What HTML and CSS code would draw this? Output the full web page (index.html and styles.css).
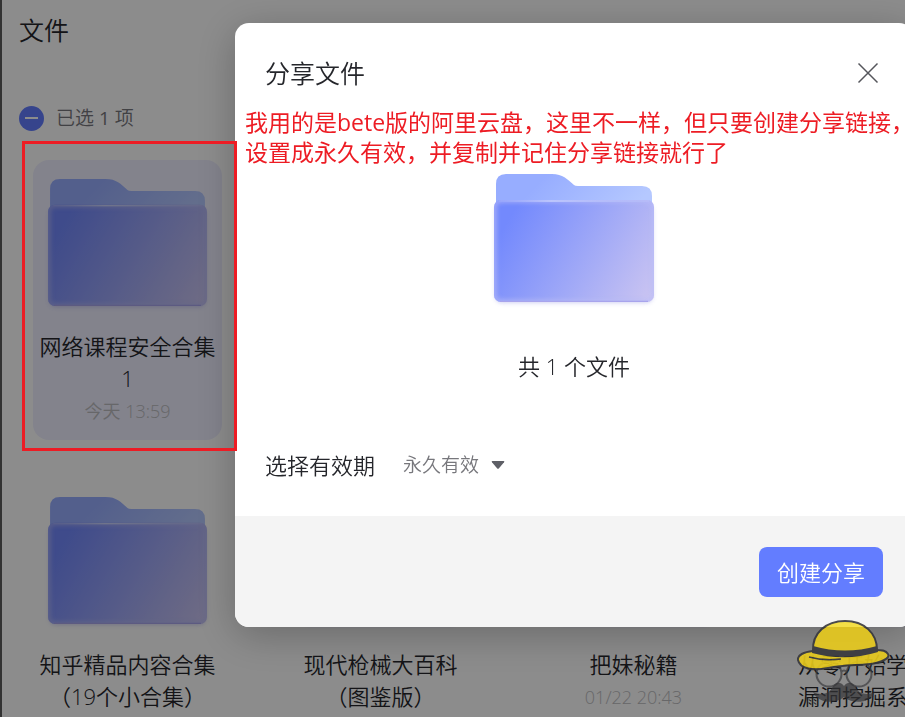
FILE: index.html
```html
<!DOCTYPE html>
<html lang="zh-CN">

<head>
    <meta charset="utf-8">
    <meta name="viewport" content="width=device-width, initial-scale=1.0">
    <title>文件</title>
    <link rel="stylesheet" href="styles.css">
</head>

<body>
    <!-- shared folder icon -->
    <svg class="symbols" aria-hidden="true">
        <defs>
            <linearGradient id="back" x1="0" y1="0" x2="1" y2="0.3">
                <stop offset="0.3" stop-color="#97adff" />
                <stop offset="1" stop-color="#b5c8ff" />
            </linearGradient>
            <linearGradient id="front" gradientUnits="userSpaceOnUse" x1="20" y1="45" x2="165" y2="130">
                <stop offset="0" stop-color="#7389fd" />
                <stop offset="0.5" stop-color="#9fa8f7" />
                <stop offset="1" stop-color="#cdc6f1" />
            </linearGradient>
            <linearGradient id="edge" x1="0" y1="0" x2="1" y2="0">
                <stop offset="0" stop-color="#c8d2ff" stop-opacity="0.2" />
                <stop offset="0.35" stop-color="#dde3ff" />
                <stop offset="1" stop-color="#c8d2ff" stop-opacity="0.3" />
            </linearGradient>
            <filter id="soft" x="-10%" y="-10%" width="120%" height="120%">
                <feGaussianBlur stdDeviation="2" />
            </filter>
            <clipPath id="frontClip">
                <rect x="4" y="28" width="160" height="102" rx="7" />
            </clipPath>
        </defs>
        <symbol id="folder" viewBox="0 0 168 136">
            <rect x="5" y="32" width="158" height="99" rx="7" fill="#8c8ce0" opacity="0.4" filter="url(#soft)" />
            <path d="M6 50V12Q6 2 16 2H62C73 2 77 7 84 13Q85 14 88 14H152Q162 14 162 24V50Z" fill="url(#back)" />
            <rect x="4" y="28" width="160" height="102" rx="7" fill="url(#front)" />
            <g clip-path="url(#frontClip)">
                <rect x="4" y="28" width="160" height="102" rx="7" fill="none" stroke="#b9bdf9" stroke-width="6" opacity="0.6" filter="url(#soft)" />
            </g>
            <path d="M9 28.5H159V29.5H9Z" fill="url(#edge)" />
            <path d="M10 129.3H158" stroke="#a8a4ec" stroke-width="1.2" />
        </symbol>
    </svg>

    <main class="page">
        <h1>文件</h1>
        <div class="selection">
            <button class="deselect" aria-label="取消选择"></button>
            <span>已选 <b>1</b> 项</span>
        </div>
        <section class="file-row">
            <article class="file selected">
                <svg class="folder"><use href="#folder" /></svg>
                <h2>网络课程安全合集<br>1</h2>
                <time>今天 13:59</time>
            </article>
        </section>
        <section class="file-row">
            <article class="file">
                <svg class="folder"><use href="#folder" /></svg>
                <h2>知乎精品内容合集<br>（19个小合集）</h2>
            </article>
            <article class="file">
                <svg class="folder"><use href="#folder" /></svg>
                <h2>现代枪械大百科<br>（图鉴版）</h2>
            </article>
            <article class="file">
                <svg class="folder"><use href="#folder" /></svg>
                <h2>把妹秘籍</h2>
                <time>01/22 20:43</time>
            </article>
            <article class="file">
                <svg class="folder"><use href="#folder" /></svg>
                <h2 class="long">从零开始学<br>漏洞挖掘系</h2>
            </article>
        </section>
    </main>

    <div class="backdrop"></div>

    <section class="dialog" role="dialog" aria-labelledby="dialog_title">
        <header>
            <h2 id="dialog_title">分享文件</h2>
            <button class="close" aria-label="关闭">
                <svg width="24" height="24" viewBox="0 0 24 24" fill="none" stroke="#55565c" stroke-width="1.5">
                    <path d="M2.5 2.5L21.5 21.5M21.5 2.5L2.5 21.5" />
                </svg>
            </button>
        </header>
        <div class="content">
            <svg class="folder"><use href="#folder" /></svg>
            <p>共 1 个文件</p>
        </div>
        <div class="expiry">
            <label for="expiry">选择有效期</label>
            <div class="select">
                <select id="expiry">
                    <option>永久有效</option>
                </select>
                <svg width="14" height="10" viewBox="0 0 14 10">
                    <path d="M1.5 1H12.5Q14 1 13 2.3L8 8.3Q7 9.4 6 8.3L1 2.3Q0 1 1.5 1Z" fill="#5e5f66" />
                </svg>
            </div>
        </div>
        <footer>
            <button class="create">创建分享</button>
        </footer>
    </section>

    <!-- annotations -->
    <div class="mark"></div>
    <p class="note">我用的是bete版的阿里云盘，这里不一样，但只要创建分享链接，<br>设置成永久有效，并复制并记住分享链接就行了</p>

    <!-- mascot -->
    <svg class="mascot" width="94" height="88" viewBox="0 0 94 88">
        <g fill="none" stroke="#3c3c3f" stroke-width="2" opacity="0.7">
            <circle cx="32" cy="55" r="12.5" />
            <circle cx="62" cy="55" r="12.5" />
            <path d="M44 53Q47 50 50 53" />
        </g>
        <path d="M47 67C51 62 56 63 59 69C63 76 71 76 78 73C73 84 57 86 47 78C37 86 21 84 16 73C23 76 31 76 35 69C38 63 43 62 47 67Z" fill="#333336" opacity="0.7" />
        <g opacity="0.9">
            <path d="M16 32C7 33 0 36 1 41C3 50 16 52 31 49C50 45 66 47 79 44C88 42 93 38 91 35C89 31 84 31 79 31Z" fill="#e8ca1c" stroke="#38383c" stroke-width="2" />
            <path d="M16 32C15 14 29 2 48 2C67 2 80 14 80 31Q48 41 16 32Z" fill="#e8ca1c" stroke="#38383c" stroke-width="2" />
            <path d="M29 8Q48 -2 67 8Z" fill="#fff04a" opacity="0.5" />
            <path d="M16 27Q48 36 80 27L81 33Q48 43 15 34Z" fill="#38383c" />
            <path d="M12 38Q26 42 44 40" fill="none" stroke="#38383c" stroke-width="1.5" />
        </g>
    </svg>
</body>

</html>
```
FILE: styles.css
```css
* {
    box-sizing: border-box;
}

body {
    margin: 0;
    height: 100vh;
    overflow: hidden;
    background-color: #fff;
    color: #25262b;
    font-family: "Open Sans", "Noto Sans CJK SC", sans-serif;
    font-size: 22px;
    font-weight: 350;
    line-height: 30px;
}

h1,
h2,
p {
    margin: 0;
    font-weight: 350;
}

button,
select {
    padding: 0;
    border: none;
    background: none;
    font: inherit;
    cursor: pointer;
}

.symbols {
    position: absolute;
    width: 0;
    height: 0;
}

.folder {
    display: block;
    width: 168px;
    height: 136px;
}

/* ------- file list -----------*/

.page {
    min-height: 100vh;
    padding-left: 17px;
    border-left: 2px solid #5c5c5c;
}

.page h1 {
    font-size: 25px;
    line-height: 60px;
}

.selection {
    display: flex;
    align-items: center;
    gap: 12px;
    margin-top: 43px;
    margin-bottom: 27px;
    color: #77777c;
    font-size: 19px;
}

.selection b {
    font-weight: 500;
}

.deselect {
    display: flex;
    align-items: center;
    justify-content: center;
    width: 25px;
    height: 25px;
    border-radius: 50%;
    background-color: #637dff;
}

.deselect::before {
    content: "";
    width: 13px;
    height: 2px;
    background-color: #fff;
}

.file-row {
    display: grid;
    grid-template-columns: repeat(4, 189px);
    gap: 64px;
    margin-left: 14px;
    margin-bottom: 38px;
}

.file {
    display: flex;
    flex-direction: column;
    align-items: center;
    padding: 17px 0 15px;
    border-radius: 16px;
    text-align: center;
    white-space: nowrap;
}

.file.selected {
    background-color: #eeeeff;
}

.file .folder {
    width: 167px;
    height: 135px;
}

.file h2 {
    margin-top: 18px;
    font-size: 22px;
    line-height: 32px;
}

.file h2.long {
    align-self: flex-start;
    padding-left: 6px;
}

.file time {
    margin-top: 3px;
    color: #bcbcc0;
    font-size: 18px;
    line-height: 28px;
}

.backdrop {
    position: fixed;
    inset: 0;
    background-color: rgba(0, 0, 0, 0.45);
}

/* ------- share dialog -----------*/

.dialog {
    position: fixed;
    top: 23px;
    left: 235px;
    right: -8px;
    overflow: hidden;
    border-radius: 14px;
    background-color: #fff;
    box-shadow: 0 8px 40px rgba(0, 0, 0, 0.25);
}

.dialog header {
    display: flex;
    align-items: center;
    justify-content: space-between;
    padding: 30px 33px 0 30px;
}

.dialog header h2 {
    font-size: 25px;
    line-height: 40px;
}

.close,
.close svg {
    display: block;
    width: 24px;
    height: 24px;
}

.content {
    display: flex;
    flex-direction: column;
    align-items: center;
    gap: 43px;
    padding-top: 79px;
}

.expiry {
    display: flex;
    align-items: center;
    gap: 28px;
    padding: 69px 30px 36px;
}

.select {
    position: relative;
}

.select select {
    display: block;
    padding-right: 25px;
    appearance: none;
    color: #77777c;
    font-size: 19px;
    line-height: 30px;
}

.select svg {
    position: absolute;
    top: 10px;
    right: 0;
    pointer-events: none;
}

.dialog footer {
    display: flex;
    justify-content: flex-end;
    padding: 31px 30px 30px;
    background-color: #f4f4f4;
}

.create {
    height: 50px;
    padding: 0 18px;
    border-radius: 8px;
    background-color: #637dff;
    color: #fff;
}

/* ------- annotations -----------*/

.mark {
    position: fixed;
    top: 141px;
    left: 22px;
    width: 215px;
    height: 310px;
    border: 3px solid #ed1c24;
}

.note {
    position: fixed;
    top: 107px;
    left: 245px;
    color: #ed1c24;
    font-size: 23px;
    font-weight: 400;
    line-height: 30px;
    white-space: nowrap;
}

.mascot {
    position: fixed;
    right: 14px;
    bottom: 10px;
}
```
